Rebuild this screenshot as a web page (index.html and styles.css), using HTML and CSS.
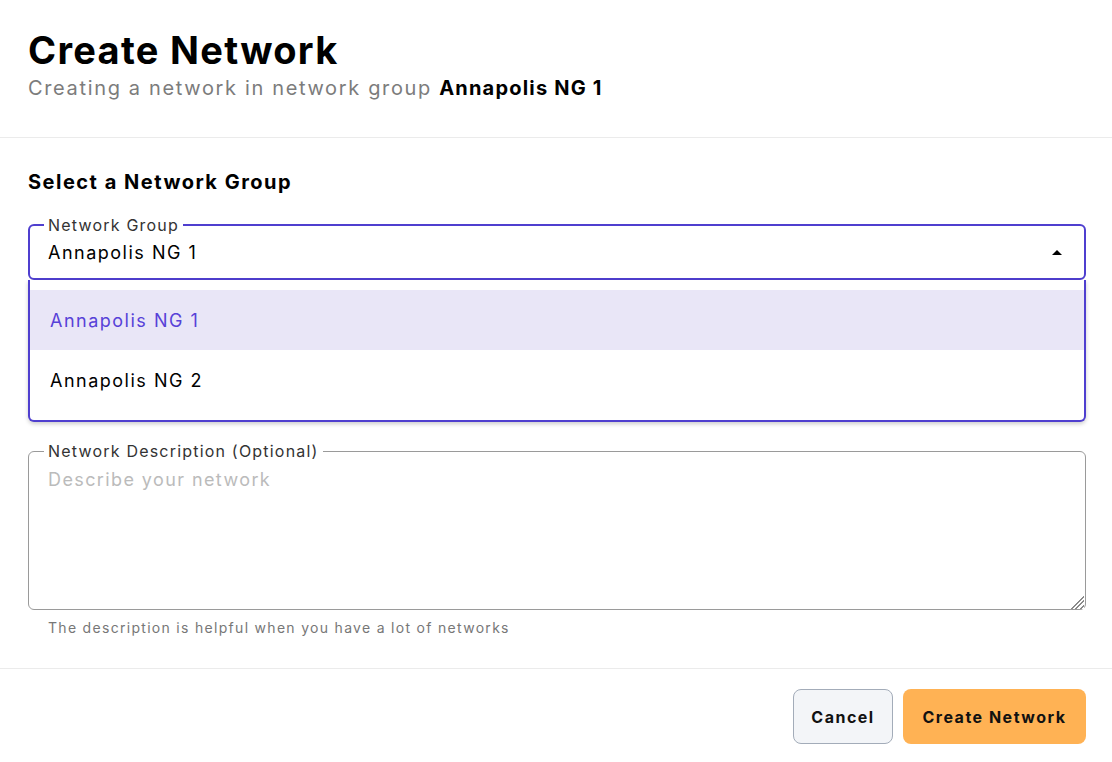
FILE: index.html
```html
<!DOCTYPE html>
<html lang="en">
<head>
<meta charset="utf-8">
<title>Create Network</title>
<link rel="stylesheet" href="styles.css">
</head>
<body>
<div class="dialog">
  <header class="header">
    <h1 class="title">Create Network</h1>
    <p class="subtitle">Creating a network in network group <strong>Annapolis NG 1</strong></p>
  </header>
  <main class="body">
    <h2 class="section-title">Select a Network Group</h2>
    <div class="select-wrap">
      <fieldset class="field field-active">
        <legend class="legend">Network Group</legend>
        <div class="select-row">
          <span class="select-value">Annapolis NG 1</span>
          <span class="caret"></span>
        </div>
      </fieldset>
      <div class="under-menu"></div>
      <ul class="menu">
        <li class="option option-selected">Annapolis NG 1</li>
        <li class="option">Annapolis NG 2</li>
      </ul>
    </div>
    <fieldset class="field field-text">
      <legend class="legend">Network Description (Optional)</legend>
      <textarea class="textarea" placeholder="Describe your network"></textarea>
    </fieldset>
    <p class="helper">The description is helpful when you have a lot of networks</p>
  </main>
  <footer class="footer">
    <button class="btn btn-cancel">Cancel</button>
    <button class="btn btn-primary">Create Network</button>
  </footer>
</div>
</body>
</html>
```
FILE: styles.css
```css
* { box-sizing: border-box; }
html, body { margin: 0; padding: 0; background: #fff; }
body {
  font-family: Inter, "Open Sans", "Liberation Sans", sans-serif;
  color: #000;
  width: 1112px;
  height: 762px;
  overflow: hidden;
}
.dialog { display: flex; flex-direction: column; }
.header {
  padding: 28px 28px 0 28px;
  height: 138px;
  border-bottom: 1px solid #ebebeb;
}
.title {
  margin: 0;
  font-size: 38px;
  line-height: 44px;
  font-weight: 700;
  letter-spacing: 1.3px;
}
.subtitle {
  margin: 2px 0 0 0;
  font-size: 20px;
  line-height: 28px;
  color: #7c7c7c;
  letter-spacing: 1.65px;
}
.subtitle strong { color: #000; font-weight: 700; letter-spacing: 1.2px; }
.body {
  padding: 0 26px 0 28px;
  height: 531px;
  border-bottom: 1px solid #ebebeb;
}
.section-title {
  margin: 0;
  padding-top: 30px;
  font-size: 20px;
  line-height: 28px;
  font-weight: 700;
  letter-spacing: 1.5px;
}
.select-wrap { position: relative; margin-top: 20px; }
.field {
  margin: 0;
  min-width: 0;
  border-radius: 6px;
}
.field-active {
  border: 2px solid #4f3fcf;
  height: 64px;
  padding: 0 18px 0 14px;
}
.legend {
  padding: 0 4px;
  font-size: 16px;
  line-height: 18px;
  color: #333;
  letter-spacing: 1.2px;
}
.select-row {
  display: flex;
  align-items: center;
  justify-content: space-between;
  height: 36px;
  margin-top: 0;
  padding-left: 4px;
}
.select-value { font-size: 18px; letter-spacing: 1.5px; }
.caret {
  width: 0; height: 0;
  border-left: 5px solid transparent;
  border-right: 5px solid transparent;
  border-bottom: 5px solid #000;
  margin-right: 4px;
}
.under-menu { height: 162px; }
.menu {
  position: absolute;
  left: 0; right: 0;
  top: 64px;
  margin: 0;
  padding: 10px 0 8px 0;
  list-style: none;
  background: #fff;
  border: 2px solid #4f3fcf;
  border-top: none;
  border-radius: 0 0 6px 6px;
  height: 142px;
  box-shadow: 0 2px 4px rgba(0,0,0,0.2);
}
.option {
  height: 60px;
  display: flex;
  align-items: center;
  padding-left: 20px;
  font-size: 18px;
  letter-spacing: 1.5px;
}
.option-selected { background: #e9e6f7; color: #5741d8; }
.field-text {
  border: 1px solid #9a9a9a;
  height: 168px;
  padding: 0 1px 0 15px;
}
.textarea {
  display: block;
  width: 100%;
  height: 149px;
  border: none;
  outline: none;
  resize: vertical;
  padding: 9px 0 0 4px;
  margin: 0;
  font-family: inherit;
  font-size: 18px;
  line-height: 22px;
  letter-spacing: 1.4px;
  background: transparent;
}
.textarea::placeholder { color: #bbb; }
.textarea::-webkit-resizer {
  background:
    linear-gradient(135deg, #fff 52%, transparent 52%),
    repeating-linear-gradient(135deg, #fff 0 2px, #8a8a8a 2px 3.2px);
}
.helper {
  margin: 8px 0 0 20px;
  font-size: 14px;
  line-height: 20px;
  color: #777;
  letter-spacing: 1.3px;
}
.footer {
  display: flex;
  justify-content: flex-end;
  gap: 10px;
  padding: 20px 26px 0 0;
}
.btn {
  height: 55px;
  border-radius: 8px;
  font-family: inherit;
  font-size: 16px;
  font-weight: 700;
  letter-spacing: 1.5px;
  color: #111;
  padding: 0;
  cursor: pointer;
}
.btn-cancel { width: 100px; background: #f3f5f8; border: 1px solid #a3acb9; }
.btn-primary { width: 183px; background: #ffb254; border: none; }
```
